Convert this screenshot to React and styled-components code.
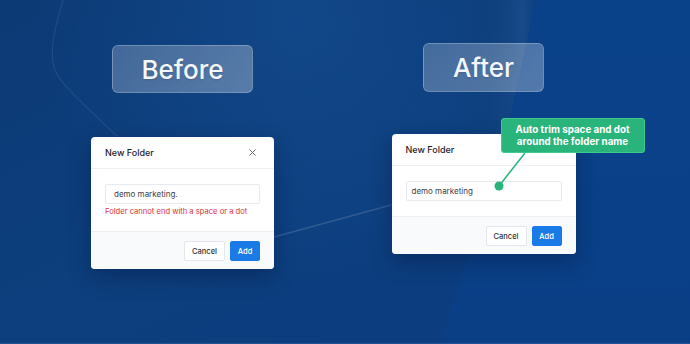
import React from "react";
import styled, { createGlobalStyle } from "styled-components";

const Global = createGlobalStyle`
  * { box-sizing: border-box; }
  html, body { margin: 0; padding: 0; }
  body { width: 690px; height: 344px; overflow: hidden; font-family: Inter, "Noto Sans", sans-serif; }
`;

const Stage = styled.div`
  position: relative;
  width: 690px;
  height: 344px;
  overflow: hidden;
  background: #0c3c7a;
`;

const Backdrop = styled.svg`
  position: absolute;
  inset: 0;
  width: 690px;
  height: 344px;
`;

const Columns = styled.div`
  position: relative;
  display: flex;
  padding-left: 32px;
  height: 100%;
`;

const Column = styled.div`
  width: 301px;
  display: flex;
  flex-direction: column;
  align-items: center;
  padding-top: ${(p) => p.$top}px;
  gap: ${(p) => p.$gap}px;
`;

const Label = styled.div`
  width: ${(p) => p.$w}px;
  height: ${(p) => p.$h}px;
  display: flex;
  align-items: center;
  justify-content: center;
  border-radius: 6px;
  background: linear-gradient(135deg, rgba(255, 255, 255, 0.22), rgba(255, 255, 255, 0.3));
  border: 1px solid rgba(255, 255, 255, 0.22);
  color: #f4f7fb;
  font-family: Inter, sans-serif;
  font-size: 26px;
  font-weight: 500;
  text-shadow: 0 1px 2px rgba(0, 0, 0, 0.15);
`;

const Dialog = styled.div`
  position: relative;
  width: ${(p) => p.$w}px;
  background: #ffffff;
  border-radius: 4px;
  box-shadow: 0 8px 22px rgba(0, 10, 40, 0.3);
`;

const Header = styled.div`
  height: 32px;
  padding: 0 14px;
  display: flex;
  align-items: center;
  justify-content: space-between;
  border-bottom: 1px solid #eef0f3;
`;

const Title = styled.div`
  font-size: 9px;
  font-weight: 500;
  color: #1f2328;
`;

const Close = styled.svg`
  width: 7px;
  height: 7px;
  margin-right: 4px;
`;

const Body = styled.div`
  padding: 15px 14px ${(p) => p.$pb}px;
`;

const Field = styled.div`
  height: 20px;
  display: flex;
  align-items: center;
  padding: 0 ${(p) => p.$px}px;
  border: 1px solid #e6e9ed;
  border-radius: 2px;
  font-size: 8px;
  color: #3d4146;
`;

const ErrorText = styled.div`
  margin-top: 3px;
  font-size: 7.6px;
  line-height: 10px;
  color: #d9323a;
`;

const Footer = styled.div`
  display: flex;
  justify-content: flex-end;
  gap: 5px;
  padding: 9px 14px 8px;
  background: #f8fafc;
  border-top: 1px solid #eceff3;
  border-radius: 0 0 4px 4px;
`;

const Button = styled.div`
  height: 20px;
  width: ${(p) => p.$w}px;
  display: flex;
  align-items: center;
  justify-content: center;
  border-radius: 2px;
  font-size: 7.5px;
  font-weight: 500;
  color: ${(p) => (p.$primary ? "#ffffff" : "#2b2f33")};
  background: ${(p) => (p.$primary ? "#1b7be6" : "#ffffff")};
  border: 1px solid ${(p) => (p.$primary ? "#1b7be6" : "#e3e6ea")};
`;

const Tooltip = styled.div`
  position: absolute;
  left: 109px;
  top: -16px;
  width: 144px;
  height: 35px;
  display: flex;
  align-items: center;
  justify-content: center;
  text-align: center;
  background: #29b47b;
  border: 1px solid #3fc98e;
  border-radius: 3px;
  color: #ffffff;
  font-size: 9.8px;
  font-weight: 700;
  line-height: 12px;
  z-index: 2;
`;

const Connector = styled.svg`
  position: absolute;
  left: 0;
  top: 0;
  width: 184px;
  height: 60px;
  overflow: visible;
  z-index: 2;
`;

const CloseIcon = () => (
  <Close viewBox="0 0 7 7">
    <path d="M0.5 0.5 L6.5 6.5 M6.5 0.5 L0.5 6.5" stroke="#5b6066" strokeWidth="0.9" fill="none" />
  </Close>
);

const FolderDialog = ({ w, value, px, error, pb, children }) => (
  <Dialog $w={w}>
    <Header>
      <Title>New Folder</Title>
      <CloseIcon />
    </Header>
    <Body $pb={pb}>
      <Field $px={px}>{value}</Field>
      {error && <ErrorText>{error}</ErrorText>}
    </Body>
    <Footer>
      <Button $w={41}>Cancel</Button>
      <Button $w={30} $primary>Add</Button>
    </Footer>
    {children}
  </Dialog>
);

export default function App() {
  return (
    <Stage>
      <Global />
      <Backdrop viewBox="0 0 690 344">
        <defs>
          <linearGradient id="base" x1="0" y1="0" x2="1" y2="1">
            <stop offset="0" stopColor="#0c3a75" />
            <stop offset="0.5" stopColor="#0d3f7e" />
            <stop offset="1" stopColor="#0a3c80" />
          </linearGradient>
          <radialGradient id="glow" cx="300" cy="20" r="260" gradientUnits="userSpaceOnUse">
            <stop offset="0" stopColor="#12488a" stopOpacity="0.9" />
            <stop offset="1" stopColor="#12488a" stopOpacity="0" />
          </radialGradient>
          <linearGradient id="edge" x1="0" y1="0" x2="1" y2="0">
            <stop offset="0" stopColor="#0c3a74" stopOpacity="0" />
            <stop offset="0.8" stopColor="#1a4d8d" stopOpacity="0.8" />
            <stop offset="1" stopColor="#1a4d8d" stopOpacity="0" />
          </linearGradient>
          <linearGradient id="right" x1="0" y1="0" x2="0" y2="1">
            <stop offset="0" stopColor="#0a428a" />
            <stop offset="1" stopColor="#0a3f86" />
          </linearGradient>
        </defs>
        <rect width="690" height="344" fill="url(#base)" />
        <rect width="690" height="344" fill="url(#glow)" />
        <polygon points="470,0 536,0 505,140 470,140" fill="url(#edge)" />
        <polygon points="536,0 690,0 690,344 440,344 505,140" fill="url(#right)" />
        <path
          d="M63 0 C 56 25, 48 50, 55 70 C 60 82, 70 92, 118 137"
          stroke="rgba(255,255,255,0.08)"
          strokeWidth="1.2"
          fill="none"
        />
        <path d="M274 237 L391 205" stroke="rgba(255,255,255,0.14)" strokeWidth="1.5" fill="none" />
        <rect x="0" y="343" width="690" height="1" fill="rgba(60,100,160,0.5)" />
      </Backdrop>
      <Columns>
        <Column $top={45} $gap={44}>
          <Label $w={141} $h={48}>Before</Label>
          <FolderDialog
            w={183}
            value="demo marketing."
            px={8}
            pb={14}
            error="Folder cannot end with a space or a dot"
          />
        </Column>
        <Column $top={43} $gap={42}>
          <Label $w={121} $h={49}>After</Label>
          <FolderDialog w={184} value="demo marketing" px={5} pb={15}>
            <Tooltip>
              Auto trim space and dot
              <br />
              around the folder name
            </Tooltip>
            <Connector viewBox="0 0 184 60">
              <line x1="133" y1="19" x2="107" y2="52" stroke="#29b47b" strokeWidth="1.5" />
              <circle cx="107" cy="52" r="4.5" fill="#29b47b" />
            </Connector>
          </FolderDialog>
        </Column>
      </Columns>
    </Stage>
  );
}
